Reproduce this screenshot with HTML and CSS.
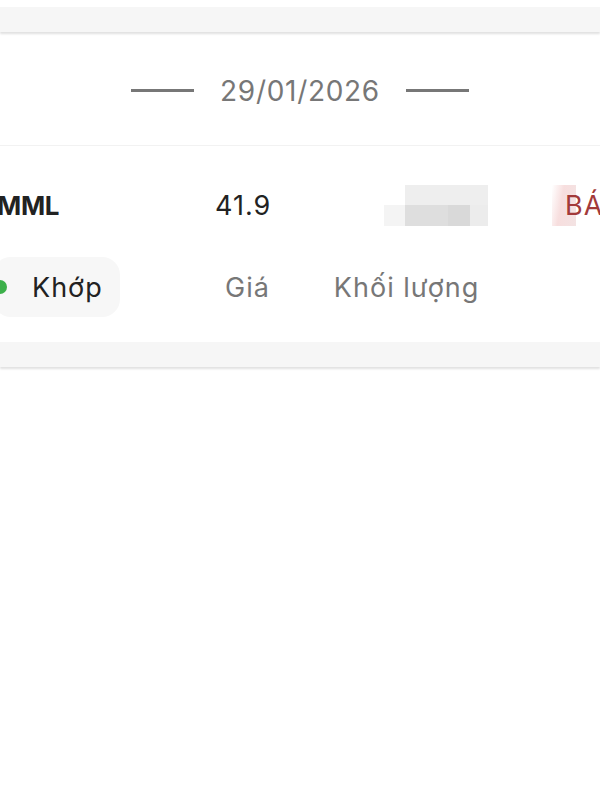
FILE: index.html
```html
<!DOCTYPE html>
<html lang="vi">
<head>
<meta charset="utf-8">
<link rel="stylesheet" href="styles.css">
</head>
<body>
<div class="page">
  <div class="band band-top"></div>
  <div class="datebar">
    <span class="dash"></span>
    <span class="date">29/01/2026</span>
    <span class="dash"></span>
  </div>
  <div class="divider"></div>
  <div class="card">
    <div class="row row-main">
      <div class="sym">MML</div>
      <div class="price">41.9</div>
      <div class="blur">
        <div class="blur-top"></div>
        <div class="blur-bottom">
          <span class="b1"></span><span class="b2"></span><span class="b3"></span><span class="b4"></span>
        </div>
      </div>
      <div class="side">
        <span class="side-blur"></span>
        <span class="side-text">BÁN</span>
      </div>
    </div>
    <div class="row row-sub">
      <div class="pill"><span class="dot"></span><span class="pill-text">Khớp</span></div>
      <div class="label label-price">Giá</div>
      <div class="label label-vol">Khối lượng</div>
    </div>
  </div>
  <div class="band band-bottom"></div>
</div>
</body>
</html>
```

FILE: styles.css
```css
* { box-sizing: border-box; }
html, body { margin: 0; padding: 0; background: #fff; }
body { font-family: Inter, "Noto Sans", sans-serif; color: #222; }
.page { width: 600px; height: 800px; overflow: hidden; padding-top: 7px; }

.band { height: 25px; background: #f6f6f6; box-shadow: 0 2px 2px rgba(0,0,0,0.12); }

.datebar { height: 113px; display: flex; align-items: center; justify-content: center; gap: 26px; padding-top: 4px; }
.dash { width: 63px; height: 3px; background: #777; flex: none; }
.date { font-size: 28px; color: #777; letter-spacing: 0.7px; }

.divider { height: 1px; background: #f2f2f2; }

.card { height: 196px; overflow: hidden; }
.row { display: flex; align-items: center; }
.row-main { height: 112px; padding-top: 6px; margin-left: -3px; }
.sym { width: 218px; flex: none; font-size: 26px; font-weight: 700; color: #222; letter-spacing: -0.3px; }
.price { width: 169px; flex: none; font-size: 27px; color: #222; letter-spacing: 1px; }
.blur { width: 104px; height: 41px; flex: none; display: flex; flex-direction: column; }
.blur-top { height: 20px; margin-left: 21px; background: #eeeeee; }
.blur-bottom { height: 21px; display: flex; }
.blur-bottom span { height: 100%; }
.b1 { width: 21px; background: #f4f4f4; }
.b2 { width: 43px; background: #dedede; }
.b3 { width: 22px; background: #d9d9d9; }
.b4 { width: 18px; background: #ececec; }
.side { margin-left: 77px; flex: none; display: flex; align-items: center; position: relative; height: 41px; }
.side-blur { position: absolute; left: -13px; top: 0; width: 24px; height: 41px; background: linear-gradient(100deg, #fff 0%, #f7dede 40%, #f3e3e3 100%); }
.side-text { position: relative; font-size: 27px; color: #a23a3a; white-space: nowrap; letter-spacing: 1px; }

.row-sub { height: 72px; padding-bottom: 14px; }
.pill { width: 127px; height: 60px; margin-left: -7px; background: #f7f7f7; border-radius: 18px; display: flex; align-items: center; padding-left: 0; gap: 25px; flex: none; }
.dot { width: 14px; height: 14px; border-radius: 50%; background: #3cb04a; flex: none; }
.pill-text { font-size: 27px; color: #222; letter-spacing: 1px; }
.label { font-size: 27px; color: #777; letter-spacing: 1px; flex: none; }
.label-price { margin-left: 105px; }
.label-vol { margin-left: 64px; }

.band-bottom { margin-top: 0; }
```
